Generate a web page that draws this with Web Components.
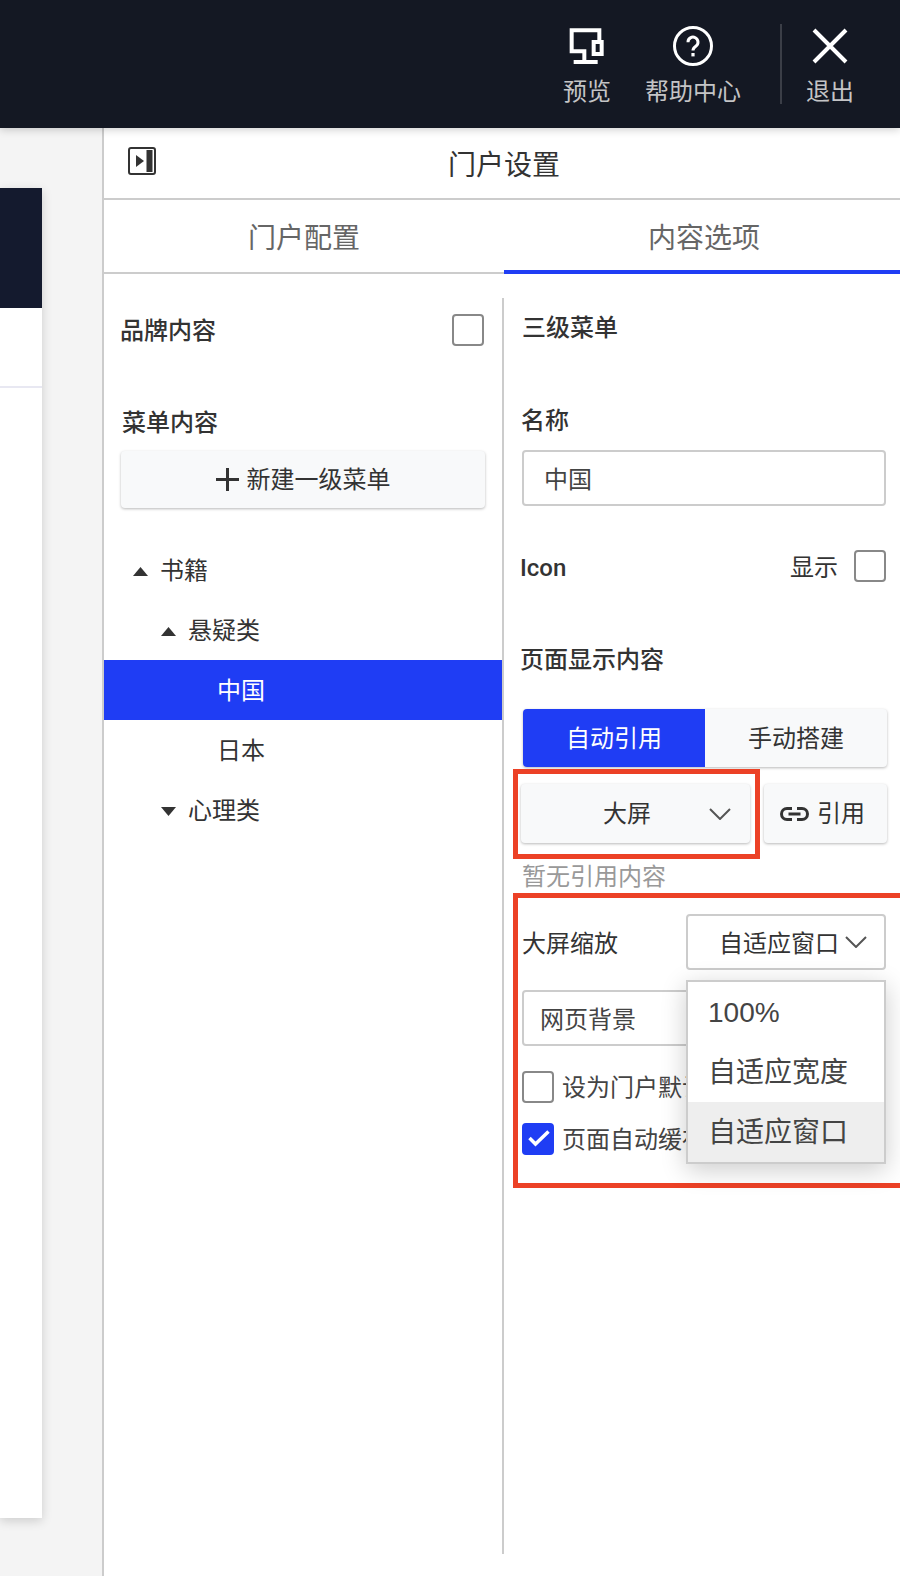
<!DOCTYPE html>
<html lang="zh-CN">
<head>
<meta charset="utf-8">
<title>门户设置</title>
<style>
  html, body {
    margin: 0;
    height: 100%;
    overflow: hidden;
    background: #f4f4f4;
    font-family: "Liberation Sans", "Noto Sans CJK SC", sans-serif;
    font-size: 24px;
    color: #333;
  }
  .heading { font-weight: 500; }
</style>
</head>
<body>
<template id="portal-app-template">
  <style>
    :host { display: flex; flex-direction: column; width: 900px; height: 1576px; overflow: hidden; }
    .main { display: flex; flex: 1; min-height: 0; }
  </style>
  <slot name="top"></slot>
  <div class="main"><slot></slot></div>
</template>

<template id="top-bar-template">
  <style>
    :host {
      display: flex;
      justify-content: flex-end;
      align-items: flex-start;
      flex: none;
      height: 128px;
      padding-right: 46px;
      background: #141823;
      box-shadow: 0 2px 8px rgba(0, 0, 0, 0.18);
      position: relative;
      z-index: 3;
    }
    ::slotted(top-action:nth-child(2)) { margin-left: 34px; }
    ::slotted(top-action:nth-child(3)) { margin-left: 39px; padding-left: 26px; }
  </style>
  <slot></slot>
</template>

<template id="top-action-template">
  <style>
    :host {
      display: flex;
      flex-direction: column;
      align-items: center;
      position: relative;
      color: #c4c4c6;
      font-size: 24px;
      line-height: 34px;
    }
    .icon { height: 40px; margin-top: 26px; display: flex; align-items: center; justify-content: center; }
    .label { margin-top: 9px; white-space: nowrap; }
    :host([divided])::before {
      content: "";
      position: absolute;
      left: 0;
      top: 24px;
      width: 2px;
      height: 80px;
      background: #3b3e47;
    }
  </style>
  <div class="icon"><slot name="icon"></slot></div>
  <div class="label"><slot></slot></div>
</template>

<template id="page-preview-template">
  <style>
    :host { display: block; flex: none; width: 102px; background: #f4f4f4; padding-top: 60px; box-sizing: border-box; }
    .card { width: 42px; height: 1330px; background: #fff; box-shadow: 0 3px 10px rgba(0, 0, 0, 0.16); }
    .hero { height: 120px; background: #141a2e; }
    .nav { height: 78px; border-bottom: 2px solid #e8e8f2; }
  </style>
  <div class="card"><div class="hero"></div><div class="nav"></div></div>
</template>

<template id="settings-panel-template">
  <style>
    :host { display: flex; flex-direction: column; flex: none; width: 800px; background: #fff; border-left: 2px solid #ccc; }
    .head {
      position: relative;
      height: 70px;
      flex: none;
      display: flex;
      align-items: center;
      justify-content: center;
      border-bottom: 2px solid #ccc;
      font-size: 28px;
      color: #333;
    }
    .toggle { position: absolute; left: 24px; top: 19px; width: 28px; height: 28px; display: block; }
    .tabs { display: flex; height: 72px; flex: none; border-bottom: 2px solid #ccc; position: relative; }
    .tab { flex: 1; display: flex; align-items: center; justify-content: center; font-size: 28px; color: #666; position: relative; }
    .tab.active::after { content: ""; position: absolute; left: 0; right: 0; bottom: -2px; height: 4px; background: #1f3df4; }
    .body { display: flex; flex: 1; min-height: 0; align-items: flex-start; }
  </style>
  <div class="head">
    <svg class="toggle" viewBox="0 0 28 28" fill="none">
      <rect x="1" y="1" width="26" height="26" rx="2" stroke="#333" stroke-width="2"/>
      <path d="M8 8l8 6-8 6z" fill="#333"/>
      <rect x="18.5" y="3" width="6" height="22" fill="#333"/>
    </svg>
    门户设置
  </div>
  <div class="tabs">
    <div class="tab">门户配置</div>
    <div class="tab active">内容选项</div>
  </div>
  <div class="body"><slot></slot></div>
</template>

<template id="menu-column-template">
  <style>
    :host { display: block; flex: none; width: 398px; line-height: 34px; }
    .brand { display: flex; align-items: center; justify-content: space-between; height: 32px; margin-top: 40px; padding: 0 18px 0 16px; color: #333; }
    .brand span { padding-top: 2px; font-weight: 500; }
    .label { margin: 60px 0 0 18px; font-weight: 500; }
    .add { margin: 11px 17px 0; }
    .tree { margin-top: 32px; }
  </style>
  <div class="brand"><span>品牌内容</span><check-box></check-box></div>
  <div class="label">菜单内容</div>
  <flat-button class="add" tall>
    <svg width="23" height="23" viewBox="0 0 23 23"><path d="M11.5 0v23M0 11.5h23" stroke="#333" stroke-width="3"/></svg>
    <span>新建一级菜单</span>
  </flat-button>
  <div class="tree"><slot></slot></div>
</template>

<template id="tree-row-template">
  <style>
    :host {
      display: flex;
      align-items: center;
      box-sizing: border-box;
      height: 60px;
      color: #333;
      font-size: 24px;
      padding-top: 2px;
      padding-left: calc(var(--depth, 0) * 28px + 29px);
    }
    :host([active]) { background: #1f3df4; color: #fff; }
    .arrow { width: 15px; height: 9px; margin-right: 12px; flex: none; display: none; }
    :host([open]) .arrow.up, :host([closed]) .arrow.down { display: block; }
    :host(:not([open]):not([closed])) { padding-left: calc(var(--depth, 0) * 28px + 57px); }
  </style>
  <svg class="arrow up" viewBox="0 0 15 9"><path d="M7.500 0l7.500 9H0z" fill="#333"/></svg>
  <svg class="arrow down" viewBox="0 0 15 9"><path d="M0 0h15L7.500 9z" fill="#333"/></svg>
  <slot></slot>
</template>

<template id="detail-column-template">
  <style>
    :host {
      display: block;
      flex: none;
      width: 402px;
      height: 1256px;
      box-sizing: border-box;
      margin-top: 24px;
      border-left: 2px solid #ccc;
      padding: 0 18px;
      line-height: 34px;
    }
  </style>
  <slot></slot>
</template>

<template id="check-box-template">
  <style>
    :host {
      display: inline-block;
      flex: none;
      width: 32px;
      height: 32px;
      box-sizing: border-box;
      border: 2px solid #888;
      border-radius: 4px;
      background: #fff;
    }
    :host([checked]) { background: #1f3df4; border-color: #1f3df4; }
    svg { display: none; width: 28px; height: 28px; }
    :host([checked]) svg { display: block; }
  </style>
  <svg viewBox="0 0 28 28" fill="none"><path d="M5.500 13l6 6L24.500 6.500" stroke="#fff" stroke-width="3.500"/></svg>
</template>

<template id="check-line-template">
  <style>
    :host { display: flex; align-items: center; gap: 8px; height: 32px; color: #444; white-space: nowrap; }
    span { padding-top: 2px; }
  </style>
  <slot name="box"></slot>
  <span><slot></slot></span>
</template>

<template id="text-field-template">
  <style>
    :host {
      display: flex;
      align-items: center;
      height: 56px;
      box-sizing: border-box;
      border: 2px solid #ccc;
      border-radius: 4px;
      padding-left: var(--field-pad, 20px);
      padding-top: 3px;
      background: #fff;
      color: #444;
    }
  </style>
  <slot></slot>
</template>

<template id="flat-button-template">
  <style>
    :host {
      display: flex;
      align-items: center;
      justify-content: center;
      gap: 8px;
      height: 59px;
      box-sizing: border-box;
      background: #f8f9fa;
      border-radius: 4px;
      box-shadow: 0 1px 3px rgba(0, 0, 0, 0.28);
      color: #333;
    }
    :host([tall]) { height: 57px; }
    ::slotted(span) { padding-top: 1px; }
  </style>
  <slot></slot>
</template>

<template id="segment-switch-template">
  <style>
    :host {
      display: flex;
      width: 364px;
      height: 58px;
      margin-left: 1px;
      border-radius: 4px;
      overflow: hidden;
      background: #f8f9fa;
      box-shadow: 0 1px 3px rgba(0, 0, 0, 0.28);
    }
    div { display: flex; align-items: center; justify-content: center; color: #333; padding-top: 1px; }
    .on { width: 182px; background: #1f3df4; color: #fff; }
    .off { flex: 1; }
  </style>
  <div class="on"><slot name="on"></slot></div>
  <div class="off"><slot name="off"></slot></div>
</template>

<template id="drop-select-template">
  <style>
    :host {
      display: flex;
      align-items: center;
      justify-content: space-between;
      box-sizing: border-box;
      position: relative;
      height: 59px;
      padding: 0 19px 0 82px;
      background: #f8f9fa;
      border-radius: 4px;
      box-shadow: 0 1px 3px rgba(0, 0, 0, 0.28);
      color: #333;
    }
    :host([outlined]) {
      height: 56px;
      padding: 0 17px 0 31px;
      background: #fff;
      border: 2px solid #ccc;
      box-shadow: none;
    }
    :host([outlined]) span { padding-top: 3px; }
    svg { width: 22px; height: 12px; flex: none; }
    .popup {
      display: none;
      position: absolute;
      left: -2px;
      right: -2px;
      top: 64px;
      z-index: 5;
      box-sizing: border-box;
      background: #fff;
      border: 2px solid #ccc;
      box-shadow: 0 6px 24px rgba(0, 0, 0, 0.2);
    }
    :host([open]) .popup { display: block; }
  </style>
  <span><slot></slot></span>
  <svg viewBox="0 0 22 12" fill="none"><path d="M1 1l10 10L21 1" stroke="#555" stroke-width="2"/></svg>
  <div class="popup"><slot name="option"></slot></div>
</template>

<template id="select-option-template">
  <style>
    :host { display: flex; align-items: center; height: 60px; box-sizing: border-box; padding: 2px 0 0 20px; font-size: 28px; color: #444; white-space: nowrap; }
    :host([selected]) { background: #eee; }
  </style>
  <slot></slot>
</template>

<template id="red-callout-template">
  <style>
    :host { display: block; position: relative; }
    .frame {
      position: absolute;
      inset: var(--t, 0) var(--r, 0) var(--b, 0) var(--l, 0);
      border: 5px solid #ec4126;
      pointer-events: none;
    }
  </style>
  <slot></slot>
  <div class="frame"></div>
</template>

<portal-app>
  <top-bar slot="top">
    <top-action>
      <svg slot="icon" width="36" height="36" viewBox="210 84 108 108"><path fill="#fff" fill-rule="evenodd" d="M212 85H307V120H295V97H224V148H262V180H296V192H224V180H250V160H212ZM278 120H314V168H278ZM290 132V156H302V132Z"/></svg>
      预览
    </top-action>
    <top-action>
      <svg slot="icon" width="40" height="40" viewBox="0 0 40 40" fill="none"><circle cx="20" cy="20" r="18.5" stroke="#fff" stroke-width="3"/><path d="M15 16.200a5 5 0 1 1 7.800 4.100c-1.800 1.200-2.800 2-2.800 4.200" stroke="#fff" stroke-width="3"/><rect x="18.400" y="27" width="3.200" height="3.400" fill="#fff"/></svg>
      帮助中心
    </top-action>
    <top-action divided>
      <svg slot="icon" width="36" height="36" viewBox="0 0 36 36" fill="none"><path d="M2 2l32 32M34 2L2 34" stroke="#fff" stroke-width="4"/></svg>
      退出
    </top-action>
  </top-bar>

  <page-preview></page-preview>

  <settings-panel>
    <menu-column>
      <tree-row open>书籍</tree-row>
      <tree-row open style="--depth:1">悬疑类</tree-row>
      <tree-row active style="--depth:2">中国</tree-row>
      <tree-row style="--depth:2">日本</tree-row>
      <tree-row closed style="--depth:1">心理类</tree-row>
    </menu-column>

    <detail-column>
      <div class="heading" style="margin:13px 0 0 0">三级菜单</div>
      <div class="heading" style="margin:59px 0 0 -1px">名称</div>
      <text-field style="margin-top:12px">中国</text-field>
      <div style="display:flex;align-items:center;height:32px;margin:44px 0 0 -2px">
        <span class="heading" style="flex:1;padding-top:4px;font-family:Roboto,sans-serif">Icon</span><span style="margin-right:16px;padding-top:3px">显示</span><check-box></check-box>
      </div>
      <div class="heading" style="margin:61px 0 0 -2px">页面显示内容</div>
      <segment-switch style="margin-top:32px"><span slot="on">自动引用</span><span slot="off">手动搭建</span></segment-switch>
      <div style="display:flex;gap:14px;margin:17px -1px 0 -1px">
        <red-callout style="width:229px;--t:-15px;--r:-10px;--b:-16px;--l:-8px"><drop-select>大屏</drop-select></red-callout>
        <flat-button style="width:123px;padding-right:6px">
          <svg width="29" height="14" viewBox="0 0 29 14" fill="none"><path d="M12 1.500H7a5.500 5.500 0 0 0 0 11h5M17 1.500h5a5.500 5.500 0 0 1 0 11h-5M8.500 7h12" stroke="#333" stroke-width="3"/></svg>
          <span>引用</span>
        </flat-button>
      </div>
      <div style="margin:17px 0 -2px 0;color:#999">暂无引用内容</div>
      <red-callout style="margin-top:22px;--t:-21px;--r:-40px;--b:-33px;--l:-9px">
        <div style="display:flex;align-items:center;justify-content:space-between">
          <span style="padding-top:3px">大屏缩放</span>
          <drop-select outlined open style="width:200px">
            自适应窗口
            <select-option slot="option">100%</select-option>
            <select-option slot="option">自适应宽度</select-option>
            <select-option slot="option" selected>自适应窗口</select-option>
          </drop-select>
        </div>
        <text-field style="margin-top:20px;--field-pad:16px">网页背景</text-field>
        <check-line style="margin-top:25px"><check-box slot="box"></check-box>设为门户默认</check-line>
        <check-line style="margin-top:20px"><check-box slot="box" checked></check-box>页面自动缓存</check-line>
      </red-callout>
    </detail-column>
  </settings-panel>
</portal-app>

<script>
  class TemplatedElement extends HTMLElement {
    constructor() {
      super();
      const template = document.getElementById(this.localName + "-template");
      if (template) {
        this.attachShadow({ mode: "open" }).appendChild(template.content.cloneNode(true));
      }
    }
  }

  class PortalApp extends TemplatedElement {}
  class TopBar extends TemplatedElement {}
  class TopAction extends TemplatedElement {}
  class PagePreview extends TemplatedElement {}
  class SettingsPanel extends TemplatedElement {}
  class MenuColumn extends TemplatedElement {}
  class TreeRow extends TemplatedElement {}
  class DetailColumn extends TemplatedElement {}
  class CheckBox extends TemplatedElement {}
  class CheckLine extends TemplatedElement {}
  class TextField extends TemplatedElement {}
  class FlatButton extends TemplatedElement {}
  class SegmentSwitch extends TemplatedElement {}
  class DropSelect extends TemplatedElement {}
  class SelectOption extends TemplatedElement {}
  class RedCallout extends TemplatedElement {}

  customElements.define("check-box", CheckBox);
  customElements.define("flat-button", FlatButton);
  customElements.define("portal-app", PortalApp);
  customElements.define("top-bar", TopBar);
  customElements.define("top-action", TopAction);
  customElements.define("page-preview", PagePreview);
  customElements.define("settings-panel", SettingsPanel);
  customElements.define("menu-column", MenuColumn);
  customElements.define("tree-row", TreeRow);
  customElements.define("detail-column", DetailColumn);
  customElements.define("check-line", CheckLine);
  customElements.define("text-field", TextField);
  customElements.define("segment-switch", SegmentSwitch);
  customElements.define("drop-select", DropSelect);
  customElements.define("select-option", SelectOption);
  customElements.define("red-callout", RedCallout);
</script>
</body>
</html>
